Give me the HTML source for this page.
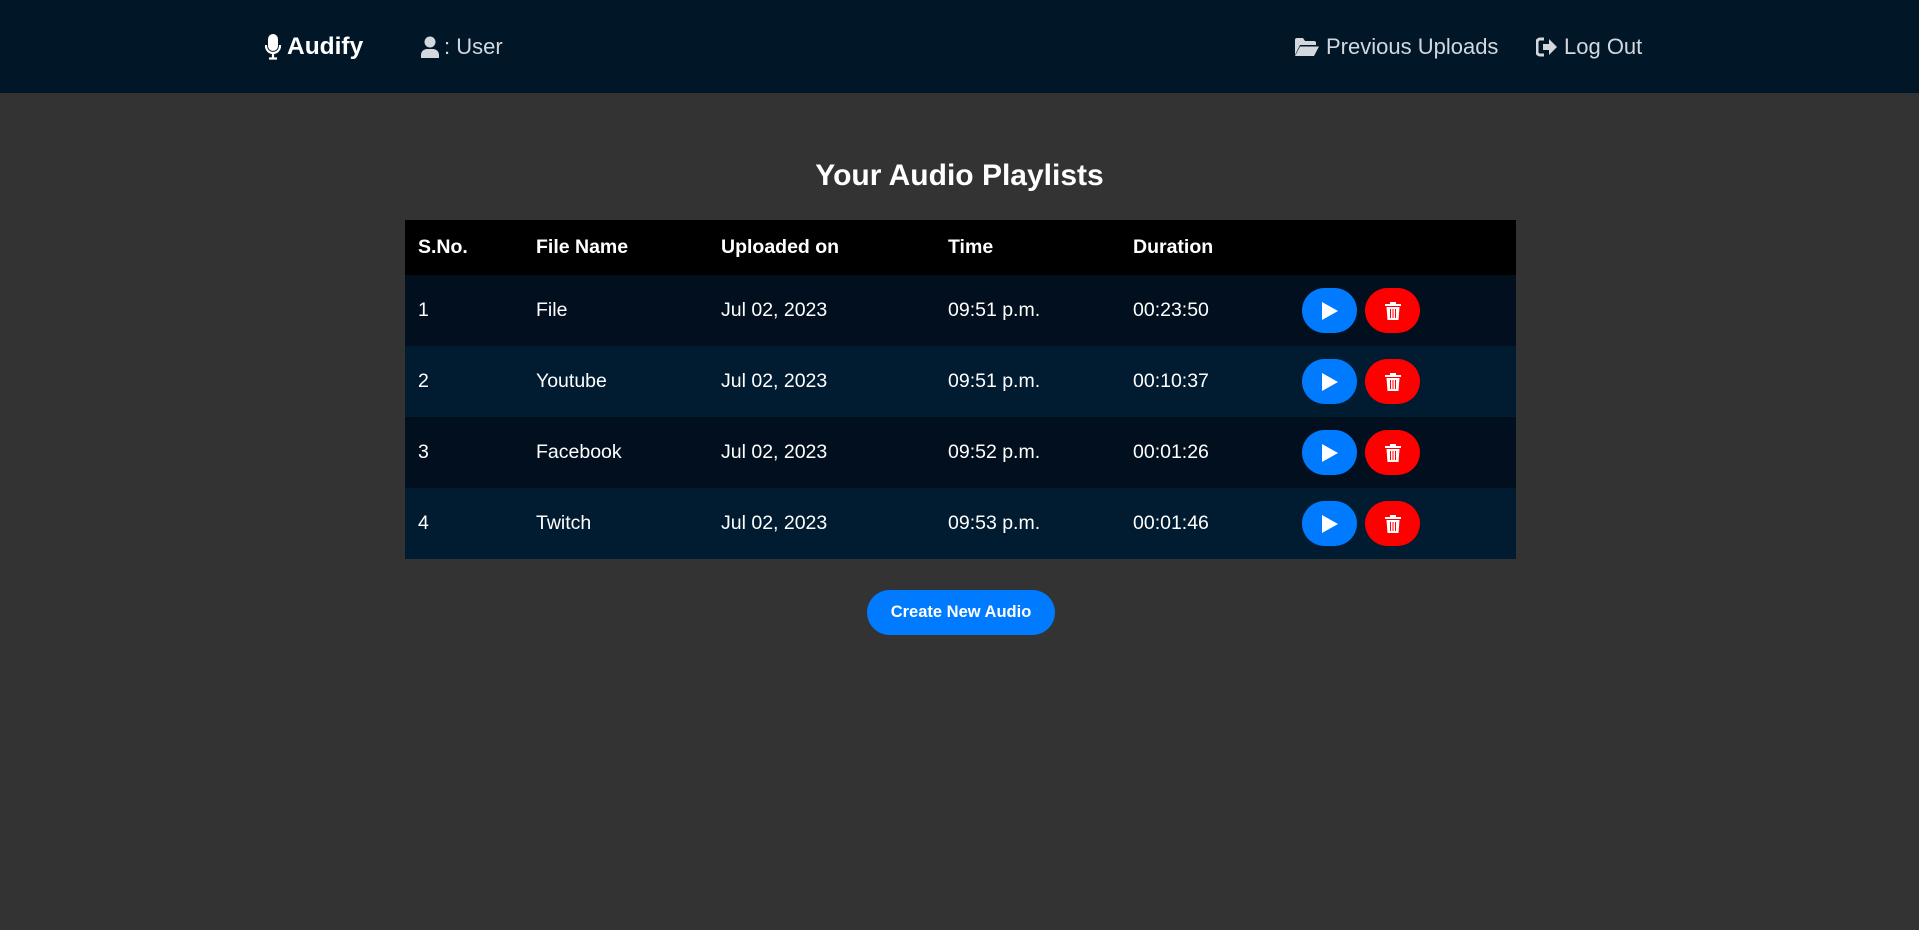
<!DOCTYPE html>
<html><head><meta charset="utf-8"><style>
*{margin:0;padding:0;box-sizing:border-box}
body{width:1919px;height:930px;background:#333;font-family:"Liberation Sans",Arial,sans-serif;color:#fff;overflow:hidden}
.nav{height:93px;background:#011627;position:relative}
.nav div{position:absolute;top:0;height:93px;display:flex;align-items:center;font-size:22px;color:#d2d8de}
.logo{left:265px;font-weight:bold;font-size:24.5px!important;color:#fff!important}
h1{position:absolute;top:159px;left:0;width:1919px;text-align:center;font-size:30px;font-weight:bold}
table{position:absolute;left:405px;top:220px;width:1111px;border-collapse:collapse;font-size:19.5px}
th{background:#000;height:55px;text-align:left;font-weight:bold;padding:0}
td{height:71px;padding:0}
tr.a td{background:#020f1e}
tr.b td{background:#011b30}
.btn{display:inline-block;width:55px;height:45px;border-radius:23px;vertical-align:middle;position:relative;margin-right:8px}
.p{background:#007bff}.d{background:#f00}
.btn svg{position:absolute;left:50%;top:50%;transform:translate(-50%,-50%)}
.create{position:absolute;left:867px;top:590px;width:188px;height:45px;border-radius:23px;background:#007bff;font-weight:bold;font-size:16.5px;display:flex;align-items:center;justify-content:center}
</style></head><body>
<div class="nav">
<div class="logo"><svg width="16" height="26" viewBox="0 0 16 26" style="margin-right:6px"><rect x="3" y="0" width="10" height="17" rx="5" fill="#fff"/><path d="M1 11v1a7 7 0 0 0 14 0v-1" stroke="#fff" stroke-width="2.2" fill="none"/><path d="M8 19v5M4 24.5h8" stroke="#fff" stroke-width="2.2"/></svg>Audify</div>
<div style="left:420px"><svg width="20" height="22" viewBox="0 0 20 22" style="margin-right:4px"><circle cx="10" cy="6" r="5.5" fill="#d2d8de"/><path d="M1 22v-3a6 6 0 0 1 6-6h6a6 6 0 0 1 6 6v3z" fill="#d2d8de"/></svg>: User</div>
<div style="left:1294px"><svg width="26" height="20" viewBox="0 0 26 20" style="margin-right:6px"><path d="M1 3a2 2 0 0 1 2-2h6l2 3h9a2 2 0 0 1 2 2v2H6l-5 10z" fill="#d2d8de"/><path d="M6 9.5h19l-5 9.5H1z" fill="#d2d8de"/></svg>Previous Uploads</div>
<div style="left:1536px"><svg width="22" height="20" viewBox="0 0 22 20" style="margin-right:6px"><path d="M8 2H4a3 3 0 0 0-3 3v10a3 3 0 0 0 3 3h4" stroke="#d2d8de" stroke-width="3" fill="none"/><path d="M7 7h6V2l8 8-8 8v-5H7z" fill="#d2d8de"/></svg>Log Out</div>
</div>
<h1>Your Audio Playlists</h1>
<table>
<tr><th style="width:131px;padding-left:13px">S.No.</th><th style="width:185px">File Name</th><th style="width:227px">Uploaded on</th><th style="width:185px">Time</th><th style="width:169px">Duration</th><th></th></tr>
<tr class="a"><td style="padding-left:13px">1</td><td>File</td><td>Jul 02, 2023</td><td>09:51 p.m.</td><td>00:23:50</td><td><span class="btn p"><svg width="18" height="20" viewBox="0 0 18 20"><path d="M1 1l16 9-16 9z" fill="#fff"/></svg></span><span class="btn d"><svg width="16" height="18" viewBox="0 0 16 18"><path d="M0 2h16v2H0zM5 0h6v2H5zM1.5 5h13l-1 13h-11z" fill="#fff"/><path d="M5.5 7v9M8 7v9M10.5 7v9" stroke="#f00" stroke-width="1"/></svg></span></td></tr>
<tr class="b"><td style="padding-left:13px">2</td><td>Youtube</td><td>Jul 02, 2023</td><td>09:51 p.m.</td><td>00:10:37</td><td><span class="btn p"><svg width="18" height="20" viewBox="0 0 18 20"><path d="M1 1l16 9-16 9z" fill="#fff"/></svg></span><span class="btn d"><svg width="16" height="18" viewBox="0 0 16 18"><path d="M0 2h16v2H0zM5 0h6v2H5zM1.5 5h13l-1 13h-11z" fill="#fff"/><path d="M5.5 7v9M8 7v9M10.5 7v9" stroke="#f00" stroke-width="1"/></svg></span></td></tr>
<tr class="a"><td style="padding-left:13px">3</td><td>Facebook</td><td>Jul 02, 2023</td><td>09:52 p.m.</td><td>00:01:26</td><td><span class="btn p"><svg width="18" height="20" viewBox="0 0 18 20"><path d="M1 1l16 9-16 9z" fill="#fff"/></svg></span><span class="btn d"><svg width="16" height="18" viewBox="0 0 16 18"><path d="M0 2h16v2H0zM5 0h6v2H5zM1.5 5h13l-1 13h-11z" fill="#fff"/><path d="M5.5 7v9M8 7v9M10.5 7v9" stroke="#f00" stroke-width="1"/></svg></span></td></tr>
<tr class="b"><td style="padding-left:13px">4</td><td>Twitch</td><td>Jul 02, 2023</td><td>09:53 p.m.</td><td>00:01:46</td><td><span class="btn p"><svg width="18" height="20" viewBox="0 0 18 20"><path d="M1 1l16 9-16 9z" fill="#fff"/></svg></span><span class="btn d"><svg width="16" height="18" viewBox="0 0 16 18"><path d="M0 2h16v2H0zM5 0h6v2H5zM1.5 5h13l-1 13h-11z" fill="#fff"/><path d="M5.5 7v9M8 7v9M10.5 7v9" stroke="#f00" stroke-width="1"/></svg></span></td></tr>
</table>
<div class="create">Create New Audio</div>
</body></html>
